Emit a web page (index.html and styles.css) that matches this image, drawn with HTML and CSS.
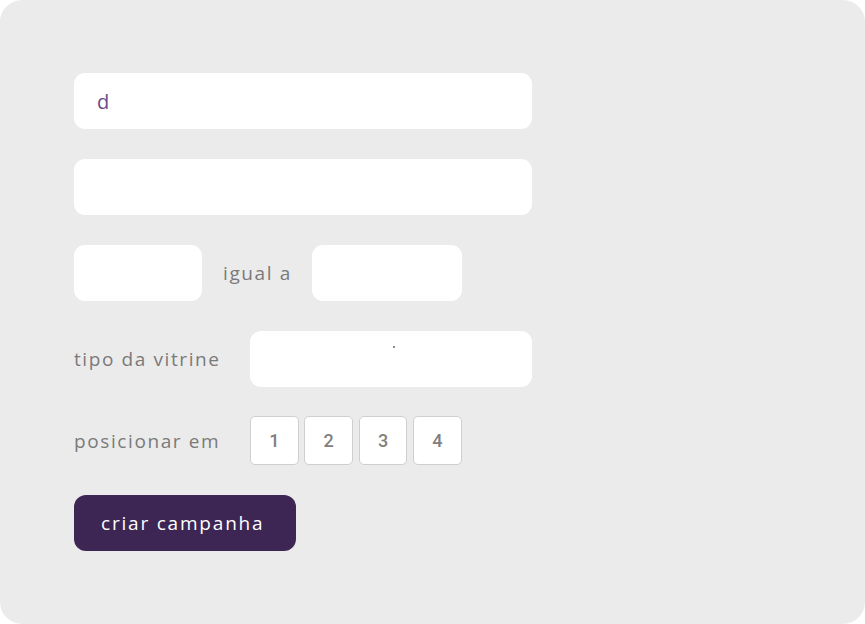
FILE: index.html
```html
<!DOCTYPE html>
<html>
<head>
<meta charset="utf-8">
<link rel="stylesheet" href="styles.css">
</head>
<body>
<div class="panel">
  <form class="form">
    <div class="field wide"><span class="value">d</span></div>
    <div class="field wide"></div>
    <div class="row">
      <div class="field small"></div>
      <span class="label igual">igual a</span>
      <div class="field medium"></div>
    </div>
    <div class="row">
      <span class="label tipo">tipo da vitrine</span>
      <div class="field select"><span class="dot"></span></div>
    </div>
    <div class="row positions">
      <span class="label tipo">posicionar em</span>
      <div class="boxes">
        <span class="box">1</span>
        <span class="box">2</span>
        <span class="box">3</span>
        <span class="box">4</span>
      </div>
    </div>
    <div class="actions"><span class="btn">criar campanha</span></div>
  </form>
</div>
</body>
</html>
```
FILE: styles.css
```css
html, body { margin: 0; padding: 0; background: #ffffff; }
.panel {
  width: 865px;
  height: 624px;
  box-sizing: border-box;
  background: #ebebeb;
  border-radius: 22px;
  padding: 73px 0 0 74px;
  font-family: "Open Sans", "Liberation Sans", sans-serif;
}
.form { display: flex; flex-direction: column; gap: 30px; margin: 0; }
.field {
  background: #ffffff;
  border-radius: 11px;
  height: 56px;
  box-sizing: border-box;
  position: relative;
}
.wide { width: 458px; display: flex; align-items: center; padding-left: 23px; }
.value { color: #6b4a88; font-size: 20px; }
.row { display: flex; align-items: center; }
.small { width: 128px; }
.medium { width: 150px; }
.select { width: 282px; }
.dot { position: absolute; left: 143px; top: 15px; width: 2px; height: 2px; background: #6b5a80; border-radius: 1px; }
.label { color: #7a7a7a; font-size: 19px; letter-spacing: 1.6px; }
.igual { margin: 0 20px 0 21px; }
.tipo { width: 176px; }
.positions { margin-top: -1px; }
.boxes { display: flex; gap: 5.7px; }
.box {
  width: 48.7px; height: 49px; box-sizing: border-box;
  background: #ffffff; border: 1px solid #cfcfcf; border-radius: 5px;
  display: flex; align-items: center; justify-content: center;
  font-family: Roboto, "Liberation Sans", Arial, sans-serif; font-weight: 500; font-size: 18px; color: #808080;
}
.actions { margin-top: 0px; }
.btn {
  display: inline-flex; align-items: center;
  height: 56px; box-sizing: border-box; width: 222px;
  padding-left: 27px;
  background: #3d2654; color: #ffffff; border-radius: 12px;
  font-size: 19px; letter-spacing: 1.8px;
}
```
